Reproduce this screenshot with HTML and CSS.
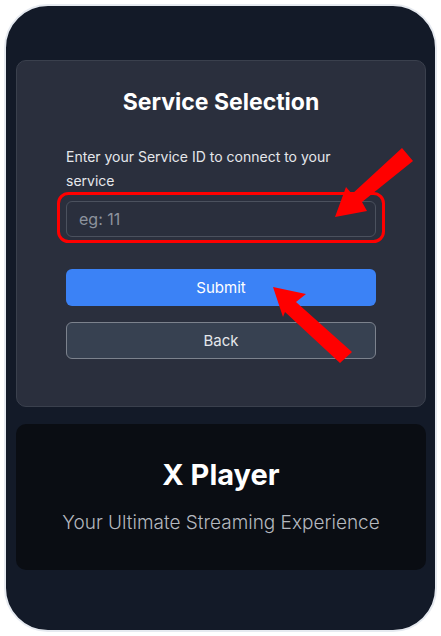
FILE: index.html
```html
<!DOCTYPE html>
<html lang="en">

<head>
    <meta charset="UTF-8">
    <meta name="viewport" content="width=device-width, initial-scale=1.0">
    <title>Service Selection</title>
    <link rel="stylesheet" href="styles.css">
</head>

<body>
    <div class="phone">
        <div class="card">
            <h1>Service Selection</h1>
            <form id="serviceForm">
                <label for="serviceId">Enter your Service ID to connect to your service</label>
                <input type="text" id="serviceId" name="serviceId" placeholder="eg: 11">
                <button type="submit" class="btn-primary">Submit</button>
                <button type="button" class="btn-secondary">Back</button>
            </form>
        </div>

        <div class="brand">
            <h2>X Player</h2>
            <p>Your Ultimate Streaming Experience</p>
        </div>
    </div>

    <svg class="marks" width="441" height="636" viewBox="0 0 441 636">
        <rect x="58.5" y="193.5" width="325" height="48" rx="10" fill="none" stroke="#ff0000" stroke-width="3"/>
        <polygon points="402,148 413,161 362,202 367,211 335,217 346,187 352,194" fill="#ff0000"/>
        <polygon points="273,287 306,294 296,302 352,352 340,363 285,312 283,317" fill="#ff0000"/>
    </svg>
</body>

</html>
```

FILE: styles.css
```css
body {
    font-family: Inter, "Noto Sans", sans-serif;
    margin: 0;
    padding: 4px;
    background-color: #ffffff;
}

.phone {
    box-sizing: border-box;
    width: 433px;
    height: 628px;
    padding: 54px 9px 0 10px;
    background-color: #131a28;
    border: 2px solid #e6eaf0;
    border-radius: 44px;
}

.card {
    box-sizing: border-box;
    height: 347px;
    padding: 26px 49px 0;
    background-color: #2a2f3d;
    border: 1px solid #3a404d;
    border-radius: 10px;
}

.card h1 {
    margin: 0 0 28px;
    font-size: 23px;
    line-height: 30px;
    font-weight: 700;
    text-align: center;
    color: #ffffff;
}

.card form {
    display: flex;
    flex-direction: column;
}

.card label {
    font-size: 14px;
    line-height: 24px;
    color: #e5e7eb;
    padding-right: 20px;
}

.card input {
    box-sizing: border-box;
    height: 36px;
    margin-top: 8px;
    padding: 0 12px;
    font-family: inherit;
    font-size: 16px;
    color: #e5e7eb;
    background-color: #2a2f3d;
    border: 1px solid #4b515e;
    border-radius: 6px;
}

.card input::placeholder {
    color: #8d939e;
}

.card button {
    height: 37px;
    font-family: inherit;
    font-size: 15px;
    border-radius: 6px;
    cursor: pointer;
}

.btn-primary {
    margin-top: 32px;
    color: #ffffff;
    background-color: #3b82f6;
    border: none;
}

.btn-secondary {
    margin-top: 16px;
    height: 36px;
    color: #e5e7eb;
    background-color: #374151;
    border: 1.5px solid #7c828d;
}

.brand {
    box-sizing: border-box;
    height: 146px;
    margin-top: 17px;
    padding-top: 33px;
    text-align: center;
    background-color: #0a0d13;
    border-radius: 10px;
}

.brand h2 {
    margin: 0;
    font-size: 29px;
    line-height: 36px;
    font-weight: 700;
    color: #ffffff;
}

.brand p {
    margin: 18px 0 0;
    font-size: 19px;
    line-height: 24px;
    font-weight: 300;
    color: #b4b8bf;
}

.marks {
    position: absolute;
    left: 0;
    top: 0;
    pointer-events: none;
}
```
